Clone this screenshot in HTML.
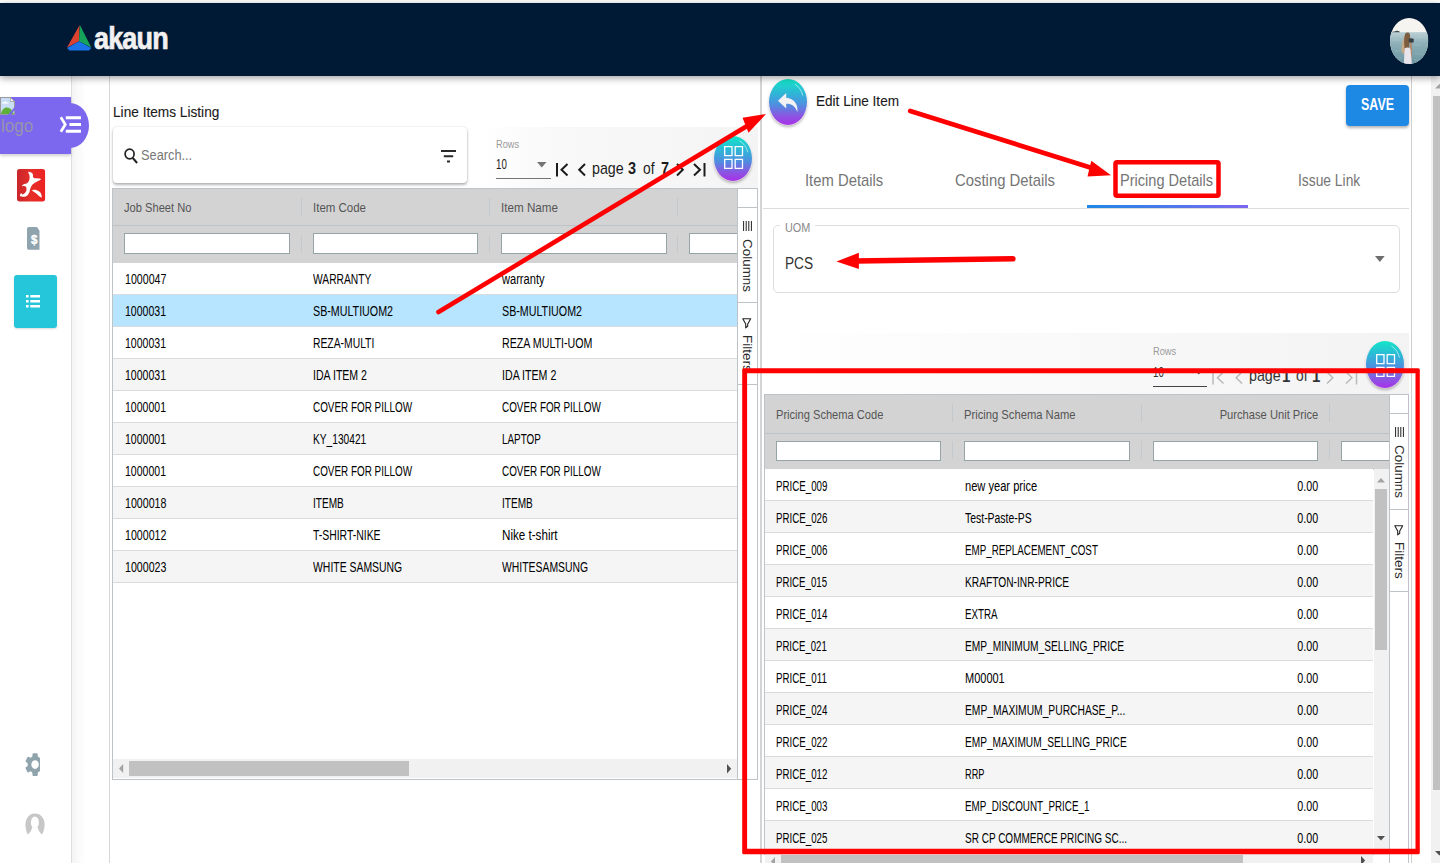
<!DOCTYPE html>
<html lang="en"><head><meta charset="utf-8"><title>akaun - Line Items</title>
<style>
html,body{margin:0;padding:0}
body{width:1440px;height:863px;overflow:hidden;background:#fff;position:relative;font-family:"Liberation Sans",sans-serif}
#app{position:absolute;left:0;top:0;width:1440px;height:863px;overflow:hidden}
#app div{position:absolute;box-sizing:border-box}
#app svg{position:absolute;overflow:visible}
.t{position:absolute;white-space:nowrap;line-height:1;display:block}
</style></head><body><div id="app">
<div style="left:71px;top:76px;width:38px;height:787px;background:linear-gradient(90deg,#f2f2f2 0,#f9f9f9 6px,#fff 15px)"></div>
<div style="left:71px;top:76px;width:1px;height:787px;background:#dedede"></div>
<div style="left:109px;top:76px;width:1px;height:787px;background:#d6d6d6"></div>
<div style="left:0px;top:76px;width:71px;height:787px;background:#fff"></div>
<div style="left:0px;top:97px;width:71px;height:56.6px;background:#7b68ee;box-shadow:0 2px 3px rgba(0,0,0,.18)"></div>
<div style="left:51px;top:103px;width:38px;height:45px;background:#7b68ee;border-radius:50%"></div>
<svg style="left:0;top:97.300px" width="15" height="18" viewBox="0 0 15 18"><path d="M.500 .500h9.900l4.100 4v13H.500z" fill="#c9def6" stroke="#9a9a9a" stroke-width="1"/><path d="M10.400 .500v4h4.100z" fill="#fff" stroke="#9a9a9a" stroke-width=".8"/><path d="M2 6.600c0-1.200 1.200-1.600 1.900-1 .4-1.500 2.600-1.500 3 0 1-.3 1.800.3 1.600 1z" fill="#fff"/><path d="M1 17c.5-4 3-6.600 6-6.600 2 0 3.500 1 4.500 2.600L14 17z" fill="#5db038"/><path d="M7.700 18.200L15 9.400v3.200l-4.300 5.600z" fill="#7b68ee"/></svg>
<span class="t" id="t0" style="top:117px;font-size:18px;color:#9695ac;left:0.5px;transform:scaleX(0.952);transform-origin:0 0;">logo</span>
<svg style="left:60px;top:116px" width="21" height="17" viewBox="0 0 21 17"><path d="M.800 1.200l4.500 7.300L.800 15.800" fill="none" stroke="#fff" stroke-width="2.700" stroke-linejoin="miter"/><path d="M5.800 1.800H21M9.500 8.500H21M5.800 15.300H21" stroke="#fff" stroke-width="3"/></svg>
<svg style="left:16.900px;top:169.200px" width="28.100" height="32.400" viewBox="0 0 28.100 32.400"><defs><linearGradient id="rg" x1="0" y1="0" x2="1" y2="0"><stop offset="0" stop-color="#c9262c"/><stop offset="0.500" stop-color="#e52e29"/><stop offset="1" stop-color="#ee2222"/></linearGradient></defs><rect x="0" y="0" width="28.100" height="32.400" rx="2.600" fill="url(#rg)"/><path d="M11.8 2.8C12.5 2.9 14.7 3.6 15.5 4.6C16.3 5.6 15.7 8.0 16.5 8.8C17.3 9.6 18.9 9.1 20.2 9.3C21.5 9.5 24.0 9.8 24.1 10.2C24.2 10.6 22.3 11.3 21.1 12.0C19.9 12.7 18.0 13.6 16.9 14.4C15.8 15.2 15.2 15.8 14.6 16.7C14.0 17.6 13.6 18.8 13.2 19.9C12.8 21.0 12.8 22.5 12.3 23.6C11.8 24.7 11.3 25.7 10.4 26.4C9.5 27.1 7.9 27.6 6.7 27.8C5.5 28.0 4.1 27.6 3.5 27.3C2.9 27.0 2.9 26.5 3.0 26.0C3.1 25.5 4.0 24.2 4.4 24.1C4.8 24.0 4.6 25.6 5.3 25.5C6.0 25.4 7.9 24.1 8.6 23.2C9.3 22.3 9.5 20.8 9.5 19.9C9.5 19.0 9.3 18.1 8.6 17.6C7.9 17.1 5.4 17.5 5.1 17.1C4.8 16.7 5.8 15.8 6.7 15.3C7.6 14.8 9.5 14.7 10.4 13.9C11.3 13.1 12.0 11.9 12.3 10.7C12.7 9.5 12.7 7.7 12.5 6.5C12.3 5.3 11.5 4.3 11.4 3.7C11.3 3.1 11.1 2.6 11.8 2.8z" fill="#fff"/><path d="M14.6 21.3C15.1 21.1 17.7 20.5 19.2 20.9C20.7 21.3 22.5 22.4 23.4 23.6C24.3 24.8 24.9 27.6 24.8 28.3C24.7 29.0 23.8 28.4 22.9 27.8C22.0 27.2 20.3 25.5 19.2 24.6C18.1 23.7 16.8 22.8 16.0 22.2C15.2 21.6 14.1 21.5 14.6 21.3z" fill="#fff"/></svg>
<svg style="left:27.200px;top:227.200px" width="12.500" height="22.800" viewBox="0 0 12.500 22.800"><path d="M1.800 0h8.200l2.500 3.800V22.800H1.800a1.800 1.800 0 0 1-1.800-1.800V1.800a1.800 1.800 0 0 1 1.800-1.800z" fill="#90a4ae"/></svg>
<span class="t" id="t1" style="top:233px;font-size:13px;color:#fff;font-weight:700;left:30.8px;transform:scaleX(0.885);transform-origin:0 0;-webkit-text-stroke:.4px #fff;">$</span>
<div style="left:14px;top:275px;width:43px;height:52.5px;background:#26c6da;border-radius:3px;box-shadow:0 1px 2px rgba(0,0,0,.15)"></div>
<svg style="left:26px;top:294.5px" width="14" height="12.5" viewBox="0 0 14 12.5"><path d="M0 0h2.600v2.600H0zM0 5h2.600v2.600H0zM0 9.900h2.600v2.600H0zM4.300 0H14v2.600H4.300zM4.300 5H14v2.600H4.300zM4.300 9.900H14v2.600H4.300z" fill="#fff"/></svg>
<div style="left:25.3px;top:752.7px;width:15px;height:23.2px;overflow:hidden"><svg style="left:-.500px;top:0" width="20.200" height="23.200" viewBox="1.800 1.800 20.400 20.400" preserveAspectRatio="none"><path fill="#90a4ae" d="M19.430 12.980c.040-.320.070-.640.070-.980s-.030-.660-.070-.980l2.110-1.650c.190-.150.240-.420.120-.640l-2-3.460c-.120-.220-.390-.300-.610-.220l-2.490 1c-.520-.400-1.080-.730-1.690-.980l-.380-2.650A.488.488 0 0 0 14 2h-4c-.250 0-.460.180-.490.420l-.380 2.650c-.610.250-1.170.590-1.690.980l-2.490-1c-.230-.090-.490 0-.610.220l-2 3.460c-.130.220-.070.490.120.640l2.110 1.650c-.040.320-.070.650-.070.980s.030.660.070.980l-2.110 1.650c-.190.150-.240.420-.120.640l2 3.460c.120.220.390.300.610.220l2.490-1c.520.400 1.080.730 1.690.980l.380 2.650c.030.240.240.420.490.420h4c.250 0 .460-.180.490-.420l.380-2.650c.610-.250 1.170-.590 1.690-.980l2.490 1c.230.090.490 0 .610-.220l2-3.460c.120-.220.070-.490-.120-.640l-2.110-1.650zM12 15.800c-2.100 0-3.800-1.700-3.800-3.800s1.700-3.800 3.800-3.800 3.800 1.700 3.800 3.800-1.700 3.800-3.800 3.800z"/></svg></div>
<svg style="left:24.700px;top:814.400px" width="20" height="21.200" viewBox="0 0 20 21.200"><path d="M10 -.500C16 -.500 19.600 4.500 19.600 10.500C19.600 15 18.500 18 16.900 20.700L2.800 20.700C1.400 18 .500 15 .500 10.500C.500 4.500 4 -.500 10 -.500z" fill="#c7c7c7"/><ellipse cx="9.900" cy="8.500" rx="4" ry="6.100" fill="#fff"/><path d="M7.200 13.300C6.800 16 5.200 18.600 2.600 20.800V21.500H17.200V20.800C14.700 18.600 13 16 12.600 13.300z" fill="#fff"/></svg>
<span class="t" id="t2" style="top:104px;font-size:15px;color:#1a1a1a;left:112.5px;transform:scaleX(0.911);transform-origin:0 0;-webkit-text-stroke:.12px #1a1a1a;">Line Items Listing</span>
<div style="left:480px;top:127px;width:278px;height:61px;background:linear-gradient(90deg,#fff 0,#f9f9f9 25%,#f4f4f4 100%)"></div>
<div style="left:113px;top:127px;width:354px;height:55.5px;background:#fff;border-radius:4px;box-shadow:0 2px 3px rgba(0,0,0,.28),0 0 2px rgba(0,0,0,.15)"></div>
<svg style="left:123.500px;top:148px" width="14" height="15.500" viewBox="0 0 14 15.500"><ellipse cx="5.600" cy="6" rx="4.500" ry="4.900" fill="none" stroke="#222" stroke-width="1.700"/><path d="M8.800 10l4.300 5" stroke="#222" stroke-width="2"/></svg>
<span class="t" id="t3" style="top:147px;font-size:15.3px;color:#777;left:140.8px;transform:scaleX(0.836);transform-origin:0 0;">Search...</span>
<svg style="left:441px;top:149.500px" width="15" height="12.500" viewBox="0 0 15 12.500"><path d="M0 1h15M2.800 6.300h9.400M6 11.500h3" stroke="#2a2a2a" stroke-width="2"/></svg>
<span class="t" id="t4" style="top:140px;font-size:10.4px;color:#9a9a9a;left:495.8px;transform:scaleX(0.893);transform-origin:0 0;">Rows</span>
<span class="t" id="t5" style="top:157px;font-size:14.4px;color:#1c1c1c;left:496.0px;transform:scaleX(0.674);transform-origin:0 0;">10</span>
<svg style="left:537.0px;top:162.0px" width="9.500" height="5.500" viewBox="0 0 9.500 5.500"><path d="M0 0h9.500L4.750 5.500z" fill="#747474"/></svg>
<div style="left:496.0px;top:177.8px;width:54.5px;height:1px;background:#747474"></div>
<svg style="left:555.5px;top:163.0px" width="12.500" height="13.500" viewBox="0 0 12.500 13.500"><path d="M1 0v13.500" stroke="#1c1c1c" stroke-width="2"/><path d="M11.500 1L5.500 6.750l6 5.750" fill="none" stroke="#1c1c1c" stroke-width="2"/></svg>
<svg style="left:578.0px;top:163.0px" width="8" height="13.500" viewBox="0 0 8 13.500"><path d="M7 1L1.200 6.750 7 12.500" fill="none" stroke="#1c1c1c" stroke-width="2"/></svg>
<span class="t" id="t6" style="top:160px;font-size:16.4px;color:#1c1c1c;left:592.0px;transform:scaleX(0.869);transform-origin:0 0;">page</span>
<span class="t" id="t7" style="top:161px;font-size:16.6px;color:#1c1c1c;font-weight:700;left:627.5px;transform:scaleX(0.870);transform-origin:0 0;">3</span>
<span class="t" id="t8" style="top:160px;font-size:16.4px;color:#1c1c1c;left:642.5px;transform:scaleX(0.841);transform-origin:0 0;">of</span>
<span class="t" id="t9" style="top:161px;font-size:16.6px;color:#1c1c1c;font-weight:700;left:660.5px;transform:scaleX(0.870);transform-origin:0 0;">7</span>
<svg style="left:675.5px;top:163.0px" width="8" height="13.500" viewBox="0 0 8 13.500"><path d="M1 1l5.800 5.750L1 12.500" fill="none" stroke="#1c1c1c" stroke-width="2"/></svg>
<svg style="left:693.0px;top:163.0px" width="12.500" height="13.500" viewBox="0 0 12.500 13.500"><path d="M11.500 0v13.500" stroke="#1c1c1c" stroke-width="2"/><path d="M1 1l6 5.750-6 5.750" fill="none" stroke="#1c1c1c" stroke-width="2"/></svg>
<div style="left:714px;top:135.5px;width:38px;height:45.0px;background:linear-gradient(180deg,#12e6c8 0%,#2db8d6 30%,#4d90e0 55%,#8a56e2 80%,#a830e8 100%);border-radius:50%;box-shadow:0 0 0 .6px rgba(255,235,245,.9),0 2px 3px rgba(0,0,0,.3)"></div>
<svg style="left:714px;top:135.5px" width="38" height="45.0" viewBox="0 0 38 45.0"><path d="M25.7 5.0A15.2 18.0 0 0 1 33.8 16.2" fill="none" stroke="rgba(255,255,255,.55)" stroke-width="1"/></svg>
<svg style="left:723.6999999999999px;top:146.0px" width="19.200" height="23" viewBox="0 0 19.200 23"><path d="M.700 .700h7.300v9H.700zM11.200 .700h7.300v9h-7.300zM.700 13.300h7.300v9H.700zM11.200 13.300h7.300v9h-7.300z" fill="none" stroke="#fff" stroke-width="1.300"/></svg>
<div style="left:112px;top:188px;width:625px;height:592px;background:#fff;border:1px solid #bdc3c7;border-right:0"></div>
<div style="left:113px;top:189px;width:624px;height:74px;background:#d3d3d3"></div>
<div style="left:113px;top:225px;width:624px;height:1px;background:#bdc3c7"></div>
<div style="left:113px;top:262.5px;width:624px;height:1px;background:#bdc3c7"></div>
<div style="left:113px;top:263px;width:624px;height:32px;background:#fff;border-bottom:1px solid #d9dcde"></div>
<div style="left:113px;top:295px;width:624px;height:32px;background:#b7e4ff;border-bottom:1px solid #d9dcde"></div>
<div style="left:113px;top:327px;width:624px;height:32px;background:#fff;border-bottom:1px solid #d9dcde"></div>
<div style="left:113px;top:359px;width:624px;height:32px;background:#f5f5f5;border-bottom:1px solid #d9dcde"></div>
<div style="left:113px;top:391px;width:624px;height:32px;background:#fff;border-bottom:1px solid #d9dcde"></div>
<div style="left:113px;top:423px;width:624px;height:32px;background:#f5f5f5;border-bottom:1px solid #d9dcde"></div>
<div style="left:113px;top:455px;width:624px;height:32px;background:#fff;border-bottom:1px solid #d9dcde"></div>
<div style="left:113px;top:487px;width:624px;height:32px;background:#f5f5f5;border-bottom:1px solid #d9dcde"></div>
<div style="left:113px;top:519px;width:624px;height:32px;background:#fff;border-bottom:1px solid #d9dcde"></div>
<div style="left:113px;top:551px;width:624px;height:32px;background:#f5f5f5;border-bottom:1px solid #d9dcde"></div>
<div style="left:300.5px;top:198px;width:1px;height:18px;background:#c3c9cc"></div>
<div style="left:300.5px;top:235px;width:1px;height:18px;background:#c3c9cc"></div>
<div style="left:124.2px;top:233px;width:165.5px;height:20.5px;background:#fff;border:1px solid #95a5a6;"></div>
<span class="t" id="t10" style="top:201px;font-size:13.5px;color:#555;left:124.2px;transform:scaleX(0.825);transform-origin:0 0;">Job Sheet No</span>
<div style="left:489.0px;top:198px;width:1px;height:18px;background:#c3c9cc"></div>
<div style="left:489.0px;top:235px;width:1px;height:18px;background:#c3c9cc"></div>
<div style="left:312.59999999999997px;top:233px;width:165.5px;height:20.5px;background:#fff;border:1px solid #95a5a6;"></div>
<span class="t" id="t11" style="top:201px;font-size:13.5px;color:#555;left:312.59999999999997px;transform:scaleX(0.851);transform-origin:0 0;">Item Code</span>
<div style="left:677.0px;top:198px;width:1px;height:18px;background:#c3c9cc"></div>
<div style="left:677.0px;top:235px;width:1px;height:18px;background:#c3c9cc"></div>
<div style="left:501.0px;top:233px;width:165.5px;height:20.5px;background:#fff;border:1px solid #95a5a6;"></div>
<span class="t" id="t12" style="top:201px;font-size:13.5px;color:#555;left:501.0px;transform:scaleX(0.863);transform-origin:0 0;">Item Name</span>
<div style="left:689.4000000000001px;top:233px;width:47.59999999999991px;height:20.5px;background:#fff;border:1px solid #95a5a6;border-right:0;"></div>
<span class="t" id="t13" style="top:272px;font-size:14px;color:#000;left:124.8px;transform:scaleX(0.759);transform-origin:0 0;">1000047</span>
<span class="t" id="t14" style="top:272px;font-size:14px;color:#000;left:313.2px;transform:scaleX(0.732);transform-origin:0 0;">WARRANTY</span>
<span class="t" id="t15" style="top:272px;font-size:14px;color:#000;left:501.6px;transform:scaleX(0.792);transform-origin:0 0;">warranty</span>
<span class="t" id="t16" style="top:304px;font-size:14px;color:#000;left:124.8px;transform:scaleX(0.752);transform-origin:0 0;">1000031</span>
<span class="t" id="t17" style="top:304px;font-size:14px;color:#000;left:313.2px;transform:scaleX(0.764);transform-origin:0 0;">SB-MULTIUOM2</span>
<span class="t" id="t18" style="top:304px;font-size:14px;color:#000;left:501.6px;transform:scaleX(0.764);transform-origin:0 0;">SB-MULTIUOM2</span>
<span class="t" id="t19" style="top:336px;font-size:14px;color:#000;left:124.8px;transform:scaleX(0.752);transform-origin:0 0;">1000031</span>
<span class="t" id="t20" style="top:336px;font-size:14px;color:#000;left:313.2px;transform:scaleX(0.739);transform-origin:0 0;">REZA-MULTI</span>
<span class="t" id="t21" style="top:336px;font-size:14px;color:#000;left:501.6px;transform:scaleX(0.762);transform-origin:0 0;">REZA MULTI-UOM</span>
<span class="t" id="t22" style="top:368px;font-size:14px;color:#000;left:124.8px;transform:scaleX(0.752);transform-origin:0 0;">1000031</span>
<span class="t" id="t23" style="top:368px;font-size:14px;color:#000;left:313.2px;transform:scaleX(0.754);transform-origin:0 0;">IDA ITEM 2</span>
<span class="t" id="t24" style="top:368px;font-size:14px;color:#000;left:501.6px;transform:scaleX(0.759);transform-origin:0 0;">IDA ITEM 2</span>
<span class="t" id="t25" style="top:400px;font-size:14px;color:#000;left:124.8px;transform:scaleX(0.752);transform-origin:0 0;">1000001</span>
<span class="t" id="t26" style="top:400px;font-size:14px;color:#000;left:313.2px;transform:scaleX(0.707);transform-origin:0 0;">COVER FOR PILLOW</span>
<span class="t" id="t27" style="top:400px;font-size:14px;color:#000;left:501.6px;transform:scaleX(0.706);transform-origin:0 0;">COVER FOR PILLOW</span>
<span class="t" id="t28" style="top:432px;font-size:14px;color:#000;left:124.8px;transform:scaleX(0.752);transform-origin:0 0;">1000001</span>
<span class="t" id="t29" style="top:432px;font-size:14px;color:#000;left:313.2px;transform:scaleX(0.728);transform-origin:0 0;">KY_130421</span>
<span class="t" id="t30" style="top:432px;font-size:14px;color:#000;left:501.6px;transform:scaleX(0.705);transform-origin:0 0;">LAPTOP</span>
<span class="t" id="t31" style="top:464px;font-size:14px;color:#000;left:124.8px;transform:scaleX(0.752);transform-origin:0 0;">1000001</span>
<span class="t" id="t32" style="top:464px;font-size:14px;color:#000;left:313.2px;transform:scaleX(0.707);transform-origin:0 0;">COVER FOR PILLOW</span>
<span class="t" id="t33" style="top:464px;font-size:14px;color:#000;left:501.6px;transform:scaleX(0.706);transform-origin:0 0;">COVER FOR PILLOW</span>
<span class="t" id="t34" style="top:496px;font-size:14px;color:#000;left:124.8px;transform:scaleX(0.759);transform-origin:0 0;">1000018</span>
<span class="t" id="t35" style="top:496px;font-size:14px;color:#000;left:313.2px;transform:scaleX(0.720);transform-origin:0 0;">ITEMB</span>
<span class="t" id="t36" style="top:496px;font-size:14px;color:#000;left:501.6px;transform:scaleX(0.720);transform-origin:0 0;">ITEMB</span>
<span class="t" id="t37" style="top:528px;font-size:14px;color:#000;left:124.8px;transform:scaleX(0.759);transform-origin:0 0;">1000012</span>
<span class="t" id="t38" style="top:528px;font-size:14px;color:#000;left:313.2px;transform:scaleX(0.744);transform-origin:0 0;">T-SHIRT-NIKE</span>
<span class="t" id="t39" style="top:528px;font-size:14px;color:#000;left:501.6px;transform:scaleX(0.831);transform-origin:0 0;">Nike t-shirt</span>
<span class="t" id="t40" style="top:560px;font-size:14px;color:#000;left:124.8px;transform:scaleX(0.759);transform-origin:0 0;">1000023</span>
<span class="t" id="t41" style="top:560px;font-size:14px;color:#000;left:313.2px;transform:scaleX(0.745);transform-origin:0 0;">WHITE SAMSUNG</span>
<span class="t" id="t42" style="top:560px;font-size:14px;color:#000;left:501.6px;transform:scaleX(0.743);transform-origin:0 0;">WHITESAMSUNG</span>
<div style="left:113px;top:758.6px;width:624.5px;height:19.6px;background:#f1f1f1"></div>
<div style="left:129px;top:760.7px;width:280px;height:15.3px;background:#c1c1c1"></div>
<svg style="left:118.700px;top:764px" width="4.200" height="9" viewBox="0 0 4 8" preserveAspectRatio="none"><path d="M4 0v8L0 4z" fill="#a3a3a3"/></svg>
<svg style="left:727.300px;top:764px" width="4.200" height="9.500" viewBox="0 0 4 8" preserveAspectRatio="none"><path d="M0 0v8l4-4z" fill="#505050"/></svg>
<div style="left:737px;top:188px;width:21px;height:592px;background:#fff;border:1px solid #bdc3c7"></div>
<div style="left:738px;top:206.7px;width:19px;height:1px;background:#bdc3c7"></div>
<div style="left:738px;top:301.8px;width:19px;height:1px;background:#bdc3c7"></div>
<div style="left:738px;top:384px;width:19px;height:1px;background:#bdc3c7"></div>
<svg style="left:742.5px;top:220.7px" width="9" height="10" viewBox="0 0 9 10"><path d="M.600 0v10M3.200 0v10M5.800 0v10M8.400 0v10" stroke="#222" stroke-width="1"/></svg>
<span class="t" id="t43" style="left:753.7px;top:238.5px;font-size:13.5px;color:#2b2b2b;transform-origin:0 0;transform:rotate(90deg) scale(0.995,1);">Columns</span>
<svg style="left:742.3px;top:317.8px" width="9.500" height="10.500" viewBox="0 0 9.500 10.500"><path d="M.800 .800h7.900L5.700 6v2.300L3.700 9.800V6z" fill="none" stroke="#222" stroke-width="1.100" stroke-linejoin="round"/></svg>
<span class="t" id="t44" style="left:753.7px;top:335.40000000000003px;font-size:13.5px;color:#2b2b2b;transform-origin:0 0;transform:rotate(90deg) scale(1.001,1);">Filters</span>
<div style="left:760.3px;top:76px;width:1.7px;height:787px;background:#d4d4d4"></div>
<div style="left:768.7px;top:79px;width:38px;height:46px;background:linear-gradient(180deg,#12e6c8 0%,#2db8d6 30%,#4d90e0 55%,#8a56e2 80%,#a830e8 100%);border-radius:50%;box-shadow:0 0 0 .6px rgba(255,235,245,.9),0 2px 3px rgba(0,0,0,.3)"></div>
<svg style="left:768.7px;top:79px" width="38" height="46" viewBox="0 0 38 46"><path d="M25.7 5.1A15.2 18.4 0 0 1 33.8 16.6" fill="none" stroke="rgba(255,255,255,.55)" stroke-width="1"/></svg>
<svg style="left:778px;top:92.500px" width="20" height="19" viewBox="0 0 20 19"><path d="M8.200 0L0 7.800l8.200 7.700v-4.800c5-.2 8.600 1.600 11.300 8.300.6-8-3.300-13.300-11.300-14.300z" fill="#f2f2f5"/></svg>
<span class="t" id="t45" style="top:93px;font-size:15px;color:#1a1a1a;left:815.8px;transform:scaleX(0.905);transform-origin:0 0;-webkit-text-stroke:.12px #1a1a1a;">Edit Line Item</span>
<div style="left:1346px;top:84.5px;width:63px;height:41.5px;background:#1e88e5;border-radius:4px;box-shadow:0 2px 3px rgba(0,0,0,.3)"></div>
<span class="t" id="t46" style="top:97px;font-size:15.6px;color:#fff;font-weight:700;left:1361px;transform:scaleX(0.799);transform-origin:0 0;">SAVE</span>
<span class="t" id="t47" style="top:173px;font-size:15.7px;color:#757575;left:805px;transform:scaleX(0.945);transform-origin:0 0;">Item Details</span>
<span class="t" id="t48" style="top:173px;font-size:15.7px;color:#757575;left:955.3px;transform:scaleX(0.948);transform-origin:0 0;">Costing Details</span>
<span class="t" id="t49" style="top:173px;font-size:15.7px;color:#757575;left:1120.3px;transform:scaleX(0.928);transform-origin:0 0;">Pricing Details</span>
<span class="t" id="t50" style="top:173px;font-size:15.7px;color:#757575;left:1297.5px;transform:scaleX(0.881);transform-origin:0 0;">Issue Link</span>
<div style="left:763px;top:207.5px;width:1646px;height:1px;background:#dcdcdc;width:646px"></div>
<div style="left:1086.5px;top:204.7px;width:161.5px;height:3px;background:linear-gradient(90deg,#1e88e5,#7b68ee)"></div>
<div style="left:773px;top:225px;width:626.5px;height:67.5px;border:1px solid #dedede;border-radius:5px;background:#fff"></div>
<div style="left:780px;top:224px;width:35px;height:4px;background:#fff"></div>
<span class="t" id="t51" style="top:222px;font-size:12.4px;color:#8a8a8a;left:784.7px;transform:scaleX(0.875);transform-origin:0 0;">UOM</span>
<span class="t" id="t52" style="top:256px;font-size:16.8px;color:#333;left:784.7px;transform:scaleX(0.814);transform-origin:0 0;">PCS</span>
<svg style="left:1375px;top:256px" width="9.700" height="6" viewBox="0 0 9.700 6"><path d="M0 0h9.700L4.850 6z" fill="#6d6d6d"/></svg>
<div style="left:763px;top:333px;width:646px;height:61px;background:linear-gradient(90deg,#fff 0,#f3f3f3 100%)"></div>
<span class="t" id="t53" style="top:347px;font-size:10.4px;color:#9a9a9a;left:1152.5px;transform:scaleX(0.893);transform-origin:0 0;">Rows</span>
<span class="t" id="t54" style="top:365px;font-size:14.4px;color:#333;left:1152.7px;transform:scaleX(0.674);transform-origin:0 0;">10</span>
<svg style="left:1193.7px;top:368.7px" width="9.500" height="5.500" viewBox="0 0 9.500 5.500"><path d="M0 0h9.500L4.750 5.500z" fill="#444"/></svg>
<div style="left:1152.7px;top:386.0px;width:54.5px;height:1px;background:#444"></div>
<svg style="left:1212.2px;top:370.5px" width="12.500" height="13.500" viewBox="0 0 12.500 13.500"><path d="M1 0v13.500" stroke="#b9b9b9" stroke-width="1.5"/><path d="M11.500 1L5.500 6.750l6 5.750" fill="none" stroke="#b9b9b9" stroke-width="1.5"/></svg>
<svg style="left:1234.7px;top:370.5px" width="8" height="13.500" viewBox="0 0 8 13.500"><path d="M7 1L1.200 6.750 7 12.500" fill="none" stroke="#b9b9b9" stroke-width="1.5"/></svg>
<span class="t" id="t55" style="top:367px;font-size:16.4px;color:#333;left:1248.7px;transform:scaleX(0.869);transform-origin:0 0;">page</span>
<span class="t" id="t56" style="top:369px;font-size:16.6px;color:#333;font-weight:700;left:1282.4px;transform:scaleX(0.900);transform-origin:0 0;">1</span>
<span class="t" id="t57" style="top:367px;font-size:16.4px;color:#333;left:1296.2px;transform:scaleX(0.841);transform-origin:0 0;">of</span>
<span class="t" id="t58" style="top:369px;font-size:16.6px;color:#333;font-weight:700;left:1312.2px;transform:scaleX(0.900);transform-origin:0 0;">1</span>
<svg style="left:1326.4px;top:370.5px" width="8" height="13.500" viewBox="0 0 8 13.500"><path d="M1 1l5.800 5.750L1 12.500" fill="none" stroke="#b9b9b9" stroke-width="1.5"/></svg>
<svg style="left:1344.8px;top:370.5px" width="12.500" height="13.500" viewBox="0 0 12.500 13.500"><path d="M11.500 0v13.500" stroke="#b9b9b9" stroke-width="1.5"/><path d="M1 1l6 5.750-6 5.750" fill="none" stroke="#b9b9b9" stroke-width="1.5"/></svg>
<div style="left:1366.4px;top:341.4px;width:37.6px;height:46.6px;background:linear-gradient(180deg,#12e6c8 0%,#2db8d6 30%,#4d90e0 55%,#8a56e2 80%,#a830e8 100%);border-radius:50%;box-shadow:0 0 0 .6px rgba(255,235,245,.9),0 2px 3px rgba(0,0,0,.3)"></div>
<svg style="left:1366.4px;top:341.4px" width="37.6" height="46.6" viewBox="0 0 37.6 46.6"><path d="M25.4 5.1A15.0 18.6 0 0 1 33.5 16.8" fill="none" stroke="rgba(255,255,255,.55)" stroke-width="1"/></svg>
<svg style="left:1375.5px;top:353.5px" width="19.200" height="23" viewBox="0 0 19.200 23"><path d="M.700 .700h7.300v9H.700zM11.200 .700h7.300v9h-7.300zM.700 13.300h7.300v9H.700zM11.200 13.300h7.300v9h-7.300z" fill="none" stroke="#fff" stroke-width="1.300"/></svg>
<div style="left:763.5px;top:394px;width:626px;height:461px;background:#fff;border:1px solid #bdc3c7;border-right:0"></div>
<div style="left:764.5px;top:395px;width:625px;height:74px;background:#d3d3d3"></div>
<div style="left:764.5px;top:432.5px;width:625px;height:1px;background:#bdc3c7"></div>
<div style="left:764.5px;top:468.5px;width:625px;height:1px;background:#bdc3c7"></div>
<div style="left:764.5px;top:469px;width:608.5px;height:32px;background:#fff;border-bottom:1px solid #d9dcde"></div>
<div style="left:764.5px;top:501px;width:608.5px;height:32px;background:#f5f5f5;border-bottom:1px solid #d9dcde"></div>
<div style="left:764.5px;top:533px;width:608.5px;height:32px;background:#fff;border-bottom:1px solid #d9dcde"></div>
<div style="left:764.5px;top:565px;width:608.5px;height:32px;background:#f5f5f5;border-bottom:1px solid #d9dcde"></div>
<div style="left:764.5px;top:597px;width:608.5px;height:32px;background:#fff;border-bottom:1px solid #d9dcde"></div>
<div style="left:764.5px;top:629px;width:608.5px;height:32px;background:#f5f5f5;border-bottom:1px solid #d9dcde"></div>
<div style="left:764.5px;top:661px;width:608.5px;height:32px;background:#fff;border-bottom:1px solid #d9dcde"></div>
<div style="left:764.5px;top:693px;width:608.5px;height:32px;background:#f5f5f5;border-bottom:1px solid #d9dcde"></div>
<div style="left:764.5px;top:725px;width:608.5px;height:32px;background:#fff;border-bottom:1px solid #d9dcde"></div>
<div style="left:764.5px;top:757px;width:608.5px;height:32px;background:#f5f5f5;border-bottom:1px solid #d9dcde"></div>
<div style="left:764.5px;top:789px;width:608.5px;height:32px;background:#fff;border-bottom:1px solid #d9dcde"></div>
<div style="left:764.5px;top:821px;width:608.5px;height:32px;background:#f5f5f5;border-bottom:1px solid #d9dcde"></div>
<div style="left:952.0px;top:404px;width:1px;height:18px;background:#c3c9cc"></div>
<div style="left:952.0px;top:441px;width:1px;height:18px;background:#c3c9cc"></div>
<div style="left:775.7px;top:441.2px;width:165.5px;height:19.5px;background:#fff;border:1px solid #95a5a6;"></div>
<span class="t" id="t59" style="top:408px;font-size:13.5px;color:#555;left:775.7px;transform:scaleX(0.822);transform-origin:0 0;">Pricing Schema Code</span>
<div style="left:1140.5px;top:404px;width:1px;height:18px;background:#c3c9cc"></div>
<div style="left:1140.5px;top:441px;width:1px;height:18px;background:#c3c9cc"></div>
<div style="left:964.1px;top:441.2px;width:165.5px;height:19.5px;background:#fff;border:1px solid #95a5a6;"></div>
<span class="t" id="t60" style="top:408px;font-size:13.5px;color:#555;left:964.1px;transform:scaleX(0.830);transform-origin:0 0;">Pricing Schema Name</span>
<div style="left:1328.5px;top:404px;width:1px;height:18px;background:#c3c9cc"></div>
<div style="left:1328.5px;top:441px;width:1px;height:18px;background:#c3c9cc"></div>
<div style="left:1152.5px;top:441.2px;width:165.5px;height:19.5px;background:#fff;border:1px solid #95a5a6;"></div>
<span class="t" id="t61" style="top:408px;font-size:13.5px;color:#555;right:122.10px;transform:scaleX(0.827);transform-origin:100% 0;">Purchase Unit Price</span>
<div style="left:1340.9px;top:441.2px;width:48.59999999999991px;height:19.5px;background:#fff;border:1px solid #95a5a6;border-right:0;"></div>
<span class="t" id="t62" style="top:479px;font-size:14px;color:#000;left:776.3px;transform:scaleX(0.695);transform-origin:0 0;">PRICE_009</span>
<span class="t" id="t63" style="top:479px;font-size:14px;color:#000;left:964.6999999999999px;transform:scaleX(0.793);transform-origin:0 0;">new year price</span>
<span class="t" id="t64" style="top:479px;font-size:14px;color:#000;right:122.10px;transform:scaleX(0.767);transform-origin:100% 0;">0.00</span>
<span class="t" id="t65" style="top:511px;font-size:14px;color:#000;left:776.3px;transform:scaleX(0.695);transform-origin:0 0;">PRICE_026</span>
<span class="t" id="t66" style="top:511px;font-size:14px;color:#000;left:964.6999999999999px;transform:scaleX(0.745);transform-origin:0 0;">Test-Paste-PS</span>
<span class="t" id="t67" style="top:511px;font-size:14px;color:#000;right:122.10px;transform:scaleX(0.767);transform-origin:100% 0;">0.00</span>
<span class="t" id="t68" style="top:543px;font-size:14px;color:#000;left:776.3px;transform:scaleX(0.695);transform-origin:0 0;">PRICE_006</span>
<span class="t" id="t69" style="top:543px;font-size:14px;color:#000;left:964.6999999999999px;transform:scaleX(0.700);transform-origin:0 0;">EMP_REPLACEMENT_COST</span>
<span class="t" id="t70" style="top:543px;font-size:14px;color:#000;right:122.10px;transform:scaleX(0.767);transform-origin:100% 0;">0.00</span>
<span class="t" id="t71" style="top:575px;font-size:14px;color:#000;left:776.3px;transform:scaleX(0.690);transform-origin:0 0;">PRICE_015</span>
<span class="t" id="t72" style="top:575px;font-size:14px;color:#000;left:964.6999999999999px;transform:scaleX(0.729);transform-origin:0 0;">KRAFTON-INR-PRICE</span>
<span class="t" id="t73" style="top:575px;font-size:14px;color:#000;right:122.10px;transform:scaleX(0.767);transform-origin:100% 0;">0.00</span>
<span class="t" id="t74" style="top:607px;font-size:14px;color:#000;left:776.3px;transform:scaleX(0.695);transform-origin:0 0;">PRICE_014</span>
<span class="t" id="t75" style="top:607px;font-size:14px;color:#000;left:964.6999999999999px;transform:scaleX(0.696);transform-origin:0 0;">EXTRA</span>
<span class="t" id="t76" style="top:607px;font-size:14px;color:#000;right:122.10px;transform:scaleX(0.767);transform-origin:100% 0;">0.00</span>
<span class="t" id="t77" style="top:639px;font-size:14px;color:#000;left:776.3px;transform:scaleX(0.687);transform-origin:0 0;">PRICE_021</span>
<span class="t" id="t78" style="top:639px;font-size:14px;color:#000;left:964.6999999999999px;transform:scaleX(0.728);transform-origin:0 0;">EMP_MINIMUM_SELLING_PRICE</span>
<span class="t" id="t79" style="top:639px;font-size:14px;color:#000;right:122.10px;transform:scaleX(0.767);transform-origin:100% 0;">0.00</span>
<span class="t" id="t80" style="top:671px;font-size:14px;color:#000;left:776.3px;transform:scaleX(0.697);transform-origin:0 0;">PRICE_011</span>
<span class="t" id="t81" style="top:671px;font-size:14px;color:#000;left:964.6999999999999px;transform:scaleX(0.785);transform-origin:0 0;">M00001</span>
<span class="t" id="t82" style="top:671px;font-size:14px;color:#000;right:122.10px;transform:scaleX(0.767);transform-origin:100% 0;">0.00</span>
<span class="t" id="t83" style="top:703px;font-size:14px;color:#000;left:776.3px;transform:scaleX(0.695);transform-origin:0 0;">PRICE_024</span>
<span class="t" id="t84" style="top:703px;font-size:14px;color:#000;left:964.6999999999999px;transform:scaleX(0.734);transform-origin:0 0;">EMP_MAXIMUM_PURCHASE_P...</span>
<span class="t" id="t85" style="top:703px;font-size:14px;color:#000;right:122.10px;transform:scaleX(0.767);transform-origin:100% 0;">0.00</span>
<span class="t" id="t86" style="top:735px;font-size:14px;color:#000;left:776.3px;transform:scaleX(0.695);transform-origin:0 0;">PRICE_022</span>
<span class="t" id="t87" style="top:735px;font-size:14px;color:#000;left:964.6999999999999px;transform:scaleX(0.724);transform-origin:0 0;">EMP_MAXIMUM_SELLING_PRICE</span>
<span class="t" id="t88" style="top:735px;font-size:14px;color:#000;right:122.10px;transform:scaleX(0.767);transform-origin:100% 0;">0.00</span>
<span class="t" id="t89" style="top:767px;font-size:14px;color:#000;left:776.3px;transform:scaleX(0.695);transform-origin:0 0;">PRICE_012</span>
<span class="t" id="t90" style="top:767px;font-size:14px;color:#000;left:964.6999999999999px;transform:scaleX(0.656);transform-origin:0 0;">RRP</span>
<span class="t" id="t91" style="top:767px;font-size:14px;color:#000;right:122.10px;transform:scaleX(0.767);transform-origin:100% 0;">0.00</span>
<span class="t" id="t92" style="top:799px;font-size:14px;color:#000;left:776.3px;transform:scaleX(0.695);transform-origin:0 0;">PRICE_003</span>
<span class="t" id="t93" style="top:799px;font-size:14px;color:#000;left:964.6999999999999px;transform:scaleX(0.701);transform-origin:0 0;">EMP_DISCOUNT_PRICE_1</span>
<span class="t" id="t94" style="top:799px;font-size:14px;color:#000;right:122.10px;transform:scaleX(0.767);transform-origin:100% 0;">0.00</span>
<span class="t" id="t95" style="top:831px;font-size:14px;color:#000;left:776.3px;transform:scaleX(0.695);transform-origin:0 0;">PRICE_025</span>
<span class="t" id="t96" style="top:831px;font-size:14px;color:#000;left:964.6999999999999px;transform:scaleX(0.714);transform-origin:0 0;">SR CP COMMERCE PRICING SC...</span>
<span class="t" id="t97" style="top:831px;font-size:14px;color:#000;right:122.10px;transform:scaleX(0.767);transform-origin:100% 0;">0.00</span>
<div style="left:1373.5px;top:469px;width:15.5px;height:386px;background:#f1f1f1"></div>
<div style="left:1375.3px;top:489px;width:11.3px;height:160.5px;background:#c1c1c1"></div>
<svg style="left:1377px;top:477.500px" width="8" height="4.500" viewBox="0 0 8 4.500"><path d="M0 4.500h8L4 0z" fill="#a3a3a3"/></svg>
<svg style="left:1377px;top:836px" width="8" height="4.500" viewBox="0 0 8 4.500"><path d="M0 0h8L4 4.500z" fill="#505050"/></svg>
<div style="left:764.5px;top:854.2px;width:608.5px;height:9px;background:#f1f1f1"></div>
<div style="left:780.7px;top:855.3px;width:462px;height:8px;background:#c1c1c1"></div>
<svg style="left:770.800px;top:856.700px" width="4" height="9" viewBox="0 0 4 8" preserveAspectRatio="none"><path d="M4 0v8L0 4z" fill="#a3a3a3"/></svg>
<svg style="left:1360.800px;top:856.300px" width="4.200" height="9" viewBox="0 0 4 8" preserveAspectRatio="none"><path d="M0 0v8l4-4z" fill="#505050"/></svg>
<div style="left:1389px;top:394px;width:20px;height:476px;background:#fff;border:1px solid #bdc3c7;border-bottom:0"></div>
<div style="left:1390px;top:413.3px;width:18px;height:1px;background:#bdc3c7"></div>
<div style="left:1390px;top:508.5px;width:18px;height:1px;background:#bdc3c7"></div>
<div style="left:1390px;top:590.5px;width:18px;height:1px;background:#bdc3c7"></div>
<svg style="left:1394.5px;top:427.3px" width="9" height="10" viewBox="0 0 9 10"><path d="M.600 0v10M3.200 0v10M5.800 0v10M8.400 0v10" stroke="#222" stroke-width="1"/></svg>
<span class="t" id="t98" style="left:1405.7px;top:445.1px;font-size:13.5px;color:#2b2b2b;transform-origin:0 0;transform:rotate(90deg) scale(0.995,1);">Columns</span>
<svg style="left:1394.3px;top:524.5px" width="9.500" height="10.500" viewBox="0 0 9.500 10.500"><path d="M.800 .800h7.900L5.700 6v2.300L3.700 9.800V6z" fill="none" stroke="#222" stroke-width="1.100" stroke-linejoin="round"/></svg>
<span class="t" id="t99" style="left:1405.7px;top:542.1px;font-size:13.5px;color:#2b2b2b;transform-origin:0 0;transform:rotate(90deg) scale(1.001,1);">Filters</span>
<div style="left:1411px;top:76px;width:1px;height:787px;background:#cfcfcf"></div>
<div style="left:1431.2px;top:76px;width:8.8px;height:787px;background:#f1f1f1"></div>
<div style="left:1432.7px;top:95.7px;width:7.3px;height:694.2px;background:#c1c1c1"></div>
<svg style="left:1435px;top:84.200px" width="5" height="4.600" viewBox="0 0 5 4.600"><path d="M0 4.600L4.400 0l.6.600v4z" fill="#a3a3a3"/></svg>
<svg style="left:1435px;top:851.300px" width="5" height="4.400" viewBox="0 0 5 4.400"><path d="M0 0h5v3.800L4.400 4.400z" fill="#505050"/></svg>
<div style="left:0px;top:0px;width:1440px;height:3px;background:#fff"></div>
<div style="left:0px;top:3px;width:1440px;height:72.5px;background:#001a35;box-shadow:0 2px 7px rgba(0,0,0,.38)"></div>
<svg style="left:66px;top:24px" width="27" height="28" viewBox="66 24 27 28"><path d="M79.600 25L67 47.600 79 41.200z" fill="#dd4130"/><path d="M79.900 25L91.300 47.600 79 41.200z" fill="#16a45b"/><path d="M67 48L79 41.200 91.300 48 89 50.600H69.500z" fill="#1a73e8"/></svg>
<span class="t" id="t100" style="top:22px;font-size:32px;color:#f1f1f1;font-weight:700;left:93.7px;transform:scaleX(0.844);transform-origin:0 0;letter-spacing:-1px;-webkit-text-stroke:.7px #f1f1f1;">akaun</span>
<svg style="left:1390px;top:17.700px" width="38.300" height="46" viewBox="0 0 38.300 46"><defs><clipPath id="av"><ellipse cx="19.150" cy="23" rx="19.150" ry="23"/></clipPath><linearGradient id="sea" x1="0" y1="0" x2="0" y2="1"><stop offset="0" stop-color="#bdd1d5"/><stop offset="0.350" stop-color="#8eb0b8"/><stop offset="1" stop-color="#6a95a1"/></linearGradient></defs><g clip-path="url(#av)"><rect width="38.300" height="46" fill="#f6f4f1"/><rect y="14.100" width="38.300" height="32" fill="url(#sea)"/><path d="M1.500 14.300c1-.9 2.200-1 3.200-.7.900-1 2.600-1.200 3.600-.5.900.1 1.500.6 1.800 1.200z" fill="#3c4a4b"/><path d="M14.800 17.500c-2.300 4-3.600 10-3.300 16l2.800 3.500 1.800-16z" fill="#c8aa86"/><path d="M15.300 15.500c1.600-1.600 4-1.300 4.600.6l.3 4.500-1 6-.6 9.500-3.600-.5-.8-9c-.3-4 .1-8.500 1.100-11.100z" fill="#7d5d40"/><path d="M18.800 20.800c1.400-.9 3.600-.9 5 .2l-.2 3.200-2.600.8-2.200-.8z" fill="#383f44"/><path d="M19.800 24.600l1.900.2.500 8-.6 9h-1.500z" fill="#b48a6f"/><path d="M14.600 30.500c1.800-1.600 4.600-1.500 5.800.4l1.500 15.100h-8z" fill="#e9e5eb"/><path d="M3 22h6M24 27h7M5 33h5M25 36h8M8 40h4M24 42h6M27 19h6" stroke="rgba(255,255,255,.18)" stroke-width=".8"/></g></svg>
<svg style="left:0;top:0" width="1440" height="863" viewBox="0 0 1440 863"><path d="M438.500 312L752 123" stroke="#fe0000" stroke-width="4.600" stroke-linecap="round" fill="none"/><path d="M766 114L742.500 117.700 748.500 132.700z" fill="#fe0000"/><path d="M910.200 111L1095 169" stroke="#fe0000" stroke-width="4.700" stroke-linecap="round" fill="none"/><path d="M1111 175.300L1091.300 160.800 1087.500 176.500z" fill="#fe0000"/><rect x="1115.500" y="162.200" width="103" height="33.600" rx="1.500" fill="none" stroke="#fe0000" stroke-width="4.500"/><path d="M1012.800 258.700L856 261" stroke="#fe0000" stroke-width="5.600" stroke-linecap="round" fill="none"/><path d="M836.400 261.500L858.900 252.800v16.100z" fill="#fe0000"/><path fill-rule="evenodd" fill="#fe0000" d="M743.700 368.300H1418.300a1.500 1.500 0 0 1 1.500 1.500V852.700a1.500 1.500 0 0 1-1.500 1.500H743.700a1.500 1.500 0 0 1-1.500-1.500V369.800a1.500 1.500 0 0 1 1.500-1.500zM747.100 373.300V848.700H1415.500V373.300z"/></svg>
</div></body></html>
